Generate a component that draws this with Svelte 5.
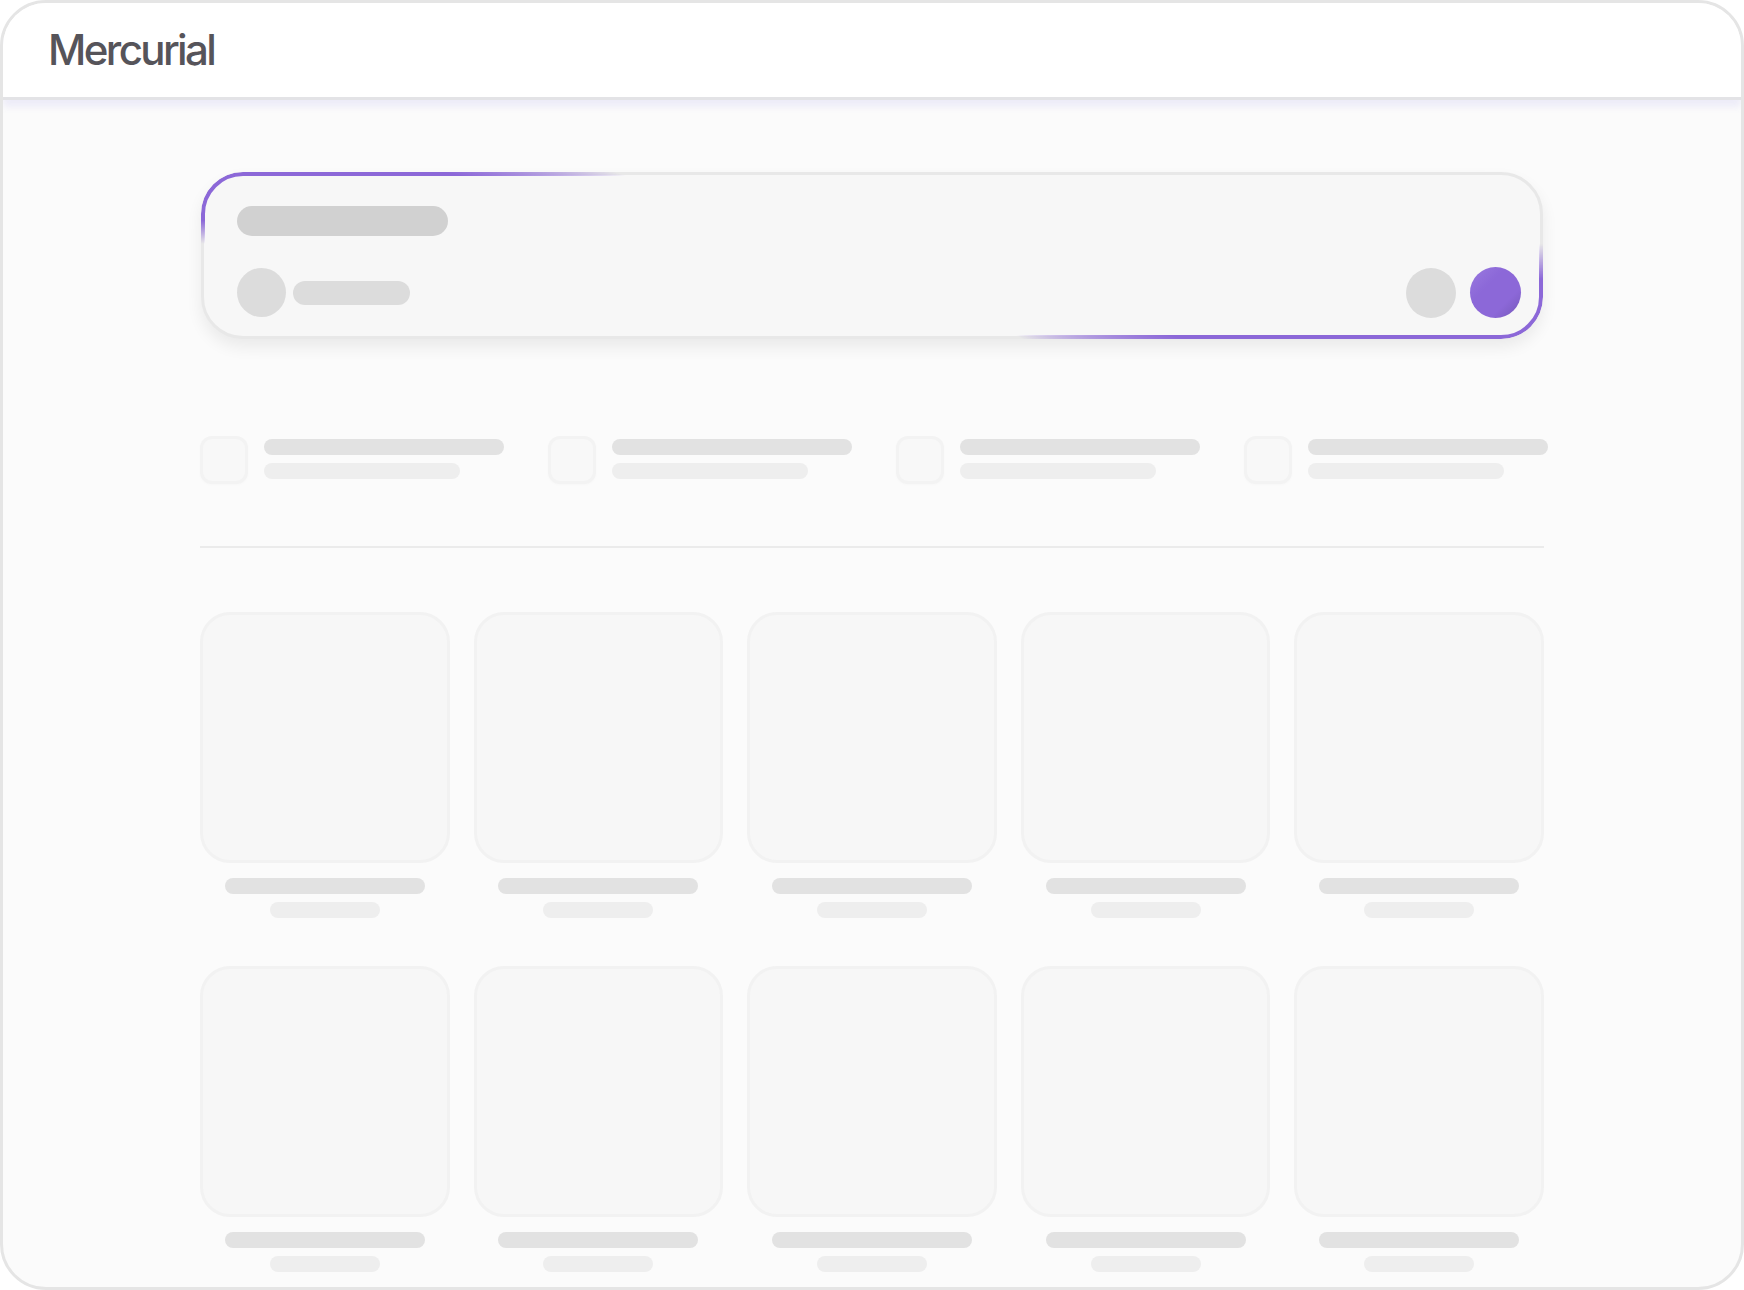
<script>
    // skeleton placeholders, nothing real to load here
    const stats = [1, 2, 3, 4];
    const products = [1, 2, 3, 4, 5, 6, 7, 8, 9, 10];
</script>

<div class="frame">
    <header class="topbar">
        <span class="logo">Mercurial</span>
    </header>

    <main class="content">
        <section class="hero">
            <div class="bone hero-title"></div>
            <div class="hero-row">
                <div class="bone avatar"></div>
                <div class="bone hero-name"></div>
                <div class="hero-actions">
                    <div class="bone action"></div>
                    <div class="send"></div>
                </div>
            </div>
        </section>

        <section class="stats">
            {#each stats as s (s)}
                <div class="stat">
                    <div class="stat-box"></div>
                    <div class="stat-lines">
                        <div class="line-a"></div>
                        <div class="line-b"></div>
                    </div>
                </div>
            {/each}
        </section>

        <hr class="divider" />

        <section class="grid">
            {#each products as p (p)}
                <div class="product">
                    <div class="thumb"></div>
                    <div class="line-a title"></div>
                    <div class="line-b sub"></div>
                </div>
            {/each}
        </section>
    </main>
</div>

<style>
    :global(body) {
        margin: 0;
        background: #fff;
    }

    .frame {
        width: 1744px;
        height: 1290px;
        box-sizing: border-box;
        border: 3px solid #e5e5e5;
        border-radius: 46px;
        overflow: hidden;
        background: #fbfbfb;
        display: flex;
        flex-direction: column;
    }

    .topbar {
        height: 97px;
        box-sizing: border-box;
        flex: none;
        display: flex;
        align-items: center;
        padding-left: 45px;
        background: #fff;
        border-bottom: 3px solid #e3e3e6;
        box-shadow: 0 7px 7px rgba(120, 110, 225, 0.1);
        position: relative;
    }

    .logo {
        font-family: Inter, "Liberation Sans", sans-serif;
        font-size: 42px;
        font-weight: 500;
        letter-spacing: -2.6px;
        line-height: 1;
        color: #56545a;
    }

    .content {
        padding: 72px 0 0 197px;
        width: 1344px;
        flex: 1;
    }

    .hero {
        position: relative;
        box-sizing: border-box;
        width: 1342px;
        height: 167px;
        margin-left: 1px;
        padding: 31px 19px 19px 33px;
        background: #f7f7f7;
        border: 3px solid #e8e8e8;
        border-radius: 42px;
        box-shadow: 0 8px 16px rgba(0, 0, 0, 0.07);
    }

    .hero::after {
        content: "";
        position: absolute;
        inset: -3px;
        border: 4px solid #8c68d8;
        border-radius: 42px;
        -webkit-mask-image: conic-gradient(
            transparent 89deg,
            #000 92deg,
            #000 105deg,
            transparent 119deg,
            transparent 271deg,
            #000 273deg,
            #000 281deg,
            transparent 288deg
        );
        mask-image: conic-gradient(
            transparent 89deg,
            #000 92deg,
            #000 105deg,
            transparent 119deg,
            transparent 271deg,
            #000 273deg,
            #000 281deg,
            transparent 288deg
        );
    }

    .bone {
        background: #dcdcdc;
    }

    .hero-title {
        width: 211px;
        height: 30px;
        border-radius: 15px;
        background: #d1d1d1;
    }

    .hero-row {
        display: flex;
        align-items: center;
        margin-top: 31px;
    }

    .avatar {
        width: 49px;
        height: 49px;
        border-radius: 50%;
    }

    .hero-name {
        width: 117px;
        height: 24px;
        border-radius: 12px;
        margin-left: 7px;
    }

    .hero-actions {
        margin-left: auto;
        display: flex;
        align-items: center;
        gap: 14px;
    }

    .action {
        width: 50px;
        height: 50px;
        border-radius: 50%;
    }

    .send {
        width: 51px;
        height: 51px;
        border-radius: 50%;
        background: linear-gradient(135deg, #9a7ae0 0%, #8c68d8 35%, #8c68d8 70%, #7457b8 100%);
    }

    .stats {
        display: grid;
        grid-template-columns: repeat(4, 304px);
        column-gap: 44px;
        margin-top: 97px;
    }

    .stat {
        display: flex;
        gap: 16px;
    }

    .stat-box {
        width: 48px;
        height: 48px;
        flex: none;
        box-sizing: border-box;
        background: #f8f8f8;
        border: 3px solid #f3f3f3;
        border-radius: 12px;
        box-shadow: 0 1px 3px rgba(0, 0, 0, 0.02);
    }

    .stat-lines {
        flex: 1;
        padding-top: 3px;
    }

    .line-a {
        height: 16px;
        border-radius: 8px;
        background: #e2e2e2;
    }

    .line-b {
        height: 16px;
        border-radius: 8px;
        background: #eeeeee;
    }

    .stat-lines .line-b {
        width: 196px;
        margin-top: 8px;
    }

    .divider {
        border: 0;
        height: 2px;
        background: #ebebeb;
        margin: 62px 0 0;
    }

    .grid {
        display: grid;
        grid-template-columns: repeat(5, 1fr);
        column-gap: 24px;
        row-gap: 48px;
        margin-top: 64px;
    }

    .product {
        display: flex;
        flex-direction: column;
        align-items: center;
    }

    .thumb {
        width: 100%;
        height: 251px;
        box-sizing: border-box;
        background: #f7f7f7;
        border: 3px solid #f2f2f2;
        border-radius: 30px;
    }

    .title {
        width: 200px;
        margin-top: 15px;
    }

    .sub {
        width: 110px;
        margin-top: 8px;
    }
</style>
